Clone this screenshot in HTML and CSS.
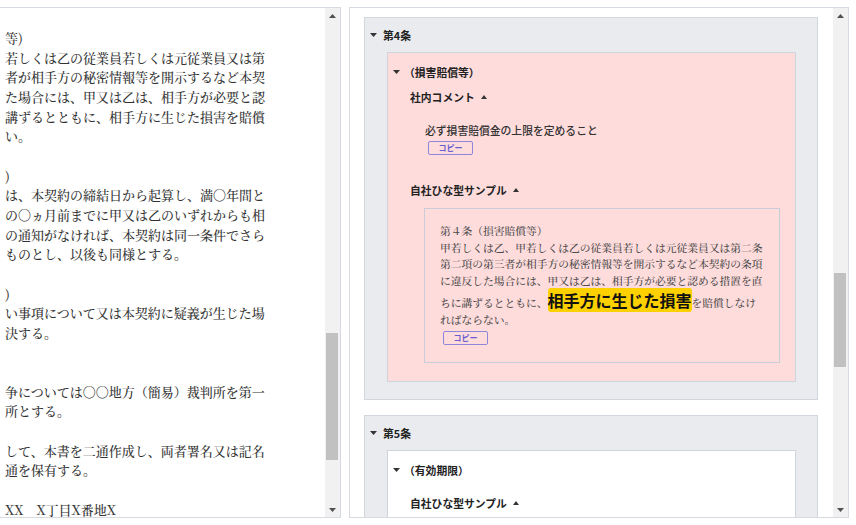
FILE: index.html
```html
<!DOCTYPE html>
<html lang="ja">
<head>
<meta charset="utf-8">
<title>契約書レビュー</title>
<link rel="stylesheet" href="styles.css">
</head>
<body>
<div class="app">
  <div class="panel panel-left">
    <div class="doc">等)
若しくは乙の従業員若しくは元従業員又は第
者が相手方の秘密情報等を開示するなど本契
た場合には、甲又は乙は、相手方が必要と認
講ずるとともに、相手方に生じた損害を賠償
い。

)
は、本契約の締結日から起算し、満〇年間と
の〇ヵ月前までに甲又は乙のいずれからも相
の通知がなければ、本契約は同一条件でさら
ものとし、以後も同様とする。

)
い事項について又は本契約に疑義が生じた場
決する。


争については〇〇地方（簡易）裁判所を第一
所とする。

して、本書を二通作成し、両者署名又は記名
通を保有する。

XX　X丁目X番地X</div>
    <div class="scrollbar">
      <div class="sb-btn"><svg width="7" height="4" viewBox="0 0 7 4"><path d="M0 4L3.5 0L7 4Z" fill="#505050"/></svg></div>
      <div class="sb-track"><div class="sb-thumb thumb-left"></div></div>
      <div class="sb-btn"><svg width="7" height="4" viewBox="0 0 7 4"><path d="M0 0L3.5 4L7 0Z" fill="#505050"/></svg></div>
    </div>
  </div>

  <div class="panel panel-right">
    <div class="list">
      <section class="article">
        <div class="article-title"><svg class="caret" width="7" height="4" viewBox="0 0 7 4"><path d="M0 0L3.5 4L7 0Z"/></svg><span>第4条</span></div>
        <div class="clause clause-alert">
          <div class="clause-title"><svg class="caret" width="7" height="4" viewBox="0 0 7 4"><path d="M0 0L3.5 4L7 0Z"/></svg><span>（損害賠償等）</span></div>
          <div class="sub">
            <div class="sub-heading sub-heading-first">社内コメント<svg class="up" width="6" height="4" viewBox="0 0 6 4"><path d="M0 4L3 0L6 4Z"/></svg></div>
            <div class="note-body">
              <div class="note-text">必ず損害賠償金の上限を定めること</div>
              <button class="copy-btn">コピー</button>
            </div>
            <div class="sub-heading sub-heading-after">自社ひな型サンプル<svg class="up" width="6" height="4" viewBox="0 0 6 4"><path d="M0 4L3 0L6 4Z"/></svg></div>
            <div class="sample-box">
              <p class="sample-text">第４条（損害賠償等）<br>甲若しくは乙、甲若しくは乙の従業員若しくは元従業員又は第二条<br>第二項の第三者が相手方の秘密情報等を開示するなど本契約の条項<br>に違反した場合には、甲又は乙は、相手方が必要と認める措置を直<br>ちに講ずるとともに、<mark class="hl">相手方に生じた損害</mark>を賠償しなけ<br>ればならない。</p>
              <button class="copy-btn copy-btn-sample">コピー</button>
            </div>
          </div>
        </div>
      </section>

      <section class="article">
        <div class="article-title"><svg class="caret" width="7" height="4" viewBox="0 0 7 4"><path d="M0 0L3.5 4L7 0Z"/></svg><span>第5条</span></div>
        <div class="clause">
          <div class="clause-title"><svg class="caret" width="7" height="4" viewBox="0 0 7 4"><path d="M0 0L3.5 4L7 0Z"/></svg><span>（有効期限）</span></div>
          <div class="sub">
            <div class="sub-heading sub-heading-only">自社ひな型サンプル<svg class="up" width="6" height="4" viewBox="0 0 6 4"><path d="M0 4L3 0L6 4Z"/></svg></div>
            <div class="sample-box">
              <p class="sample-text">第５条（有効期限）<br>本契約の有効期間は、本契約の締結日から起算し、満〇年間とする。</p>
              <button class="copy-btn copy-btn-sample">コピー</button>
            </div>
          </div>
        </div>
      </section>
    </div>
    <div class="scrollbar">
      <div class="sb-btn"><svg width="7" height="4" viewBox="0 0 7 4"><path d="M0 4L3.5 0L7 4Z" fill="#505050"/></svg></div>
      <div class="sb-track"><div class="sb-thumb thumb-right"></div></div>
      <div class="sb-btn"><svg width="7" height="4" viewBox="0 0 7 4"><path d="M0 0L3.5 4L7 0Z" fill="#505050"/></svg></div>
    </div>
  </div>
</div>
</body>
</html>
```

FILE: styles.css
```css
html, body {
  margin: 0;
  padding: 0;
  background: #ffffff;
}

body {
  font-family: "Noto Sans CJK JP", "Noto Sans", sans-serif;
  color: #222;
}

.app {
  display: flex;
  gap: 8px;
  padding: 7px 0 0 0;
}

.panel {
  display: flex;
  box-sizing: border-box;
  height: 511px;
  border: 1px solid #d6dbe2;
  overflow: hidden;
  background: #fff;
}

.panel-left {
  width: 341px;
  border-left: none;
}

.panel-right {
  width: 500px;
}

/* ---------- left document ---------- */
.doc {
  flex: 1;
  min-width: 0;
  overflow: hidden;
  padding: 20px 0 0 5px;
  white-space: pre;
  font-family: "Noto Serif CJK JP", "Liberation Serif", "Noto Sans CJK JP", serif;
  font-size: 13px;
  font-weight: 500;
  line-height: 19.66px;
  color: #333;
}

/* ---------- scrollbars ---------- */
.scrollbar {
  width: 15px;
  flex: none;
  display: flex;
  flex-direction: column;
  background: #f1f1f1;
}

.sb-btn {
  height: 15px;
  flex: none;
  display: flex;
  align-items: center;
  justify-content: center;
}

.sb-track {
  flex: 1;
  padding: 0 2px 0 1px;
}

.sb-thumb {
  background: #c1c1c1;
}

.thumb-left {
  margin-top: 310px;
  height: 127px;
}

.thumb-right {
  margin-top: 250px;
  height: 94px;
}

/* ---------- right list ---------- */
.list {
  flex: 1;
  min-width: 0;
  overflow: hidden;
  padding: 9px 15px 0 14px;
}

.article {
  background: #e9ebef;
  border: 1px solid #d2d7de;
  padding: 7px 21px 17px 5px;
  margin-bottom: 15px;
}

.caret {
  fill: #333;
  flex: none;
}

.article-title {
  display: flex;
  align-items: center;
  gap: 6px;
  height: 20px;
  font-size: 10.8px;
  font-weight: 700;
  color: #222;
}

.clause {
  margin: 7px 0 0 17px;
  background: #ffffff;
  border: 1px solid #cfd5dd;
  padding: 10px 15px 18px 5px;
}

.clause-alert {
  background: #ffdcdc;
}

.clause-title {
  display: flex;
  align-items: center;
  gap: 4px;
  height: 18px;
  font-size: 10.8px;
  font-weight: 700;
  color: #222;
}

.sub {
  margin-left: 17px;
}

.sub-heading {
  display: flex;
  align-items: center;
  gap: 6px;
  height: 18px;
  font-size: 10.8px;
  font-weight: 700;
  color: #222;
}

.sub-heading .up {
  fill: #333;
}

.sub-heading-first {
  margin-top: 7px;
}

.sub-heading-after {
  margin-top: 26px;
}

.sub-heading-only {
  margin-top: 15px;
}

.note-body {
  margin: 15px 0 0 15px;
}

.note-text {
  font-size: 10.8px;
  font-weight: 500;
  line-height: 18px;
  color: #333;
}

.copy-btn {
  display: block;
  box-sizing: border-box;
  width: 45px;
  height: 14px;
  margin: 2px 0 0 3px;
  padding: 0;
  border: 1px solid #8d86da;
  border-radius: 2px;
  background: transparent;
  font-family: "Noto Sans CJK JP", sans-serif;
  font-size: 8px;
  font-weight: 700;
  line-height: 12px;
  color: #6a5fd0;
  text-align: center;
}

.sample-box {
  margin: 9px 0 0 14px;
  border: 1px solid #c9ced8;
  padding: 14px 15px 17px 15px;
}

.sample-text {
  margin: 0;
  white-space: nowrap;
  font-family: "Noto Serif CJK JP", "Liberation Serif", "Noto Sans CJK JP", serif;
  font-size: 10.75px;
  font-weight: 500;
  line-height: 16.5px;
  color: #4a4a4a;
}

.hl {
  background: #fdd000;
  color: #111;
  font-family: "Noto Sans CJK JP", sans-serif;
  font-weight: 700;
  font-size: 16px;
  line-height: 22px;
  border-radius: 3px;
}

.copy-btn-sample {
  margin-top: 3px;
}
```
